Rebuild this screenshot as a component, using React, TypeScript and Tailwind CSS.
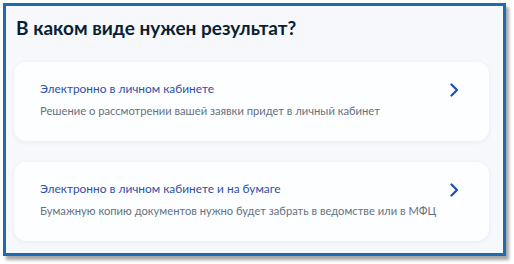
import React from "react";

function Chevron() {
  return (
    <svg width="10" height="14" viewBox="0 0 10 14" fill="none" className="shrink-0">
      <path d="M2.5 1.5 L8 7 L2.5 12.5" stroke="#1d4fb8" strokeWidth="2.2" strokeLinecap="round" strokeLinejoin="round" />
    </svg>
  );
}

function Option({ title, desc }: { title: string; desc: string }) {
  return (
    <div className="flex h-[79px] items-center rounded-[12px] bg-[#fdfeff] pb-[4px] pl-[26px] pr-[30px] shadow-[0_1px_4px_rgba(60,80,120,0.08)]">
      <div className="flex flex-1 flex-col">
        <div className="text-[11.9px] leading-[18px] text-[#2e50a5]">{title}</div>
        <div className="mt-[5px] text-[11.2px] leading-[16px] text-[#66727f]">{desc}</div>
      </div>
      <div className="-mt-[20px]">
        <Chevron />
      </div>
    </div>
  );
}

export default function App() {
  return (
    <div className="h-[264px] w-[514px] bg-white pl-[3px] pt-[3px]" style={{ fontFamily: "Lato, 'Noto Sans', sans-serif" }}>
      <div className="h-[253px] w-[503px] border-[3px] border-[#1b6cb3] bg-[#f6f8fc] shadow-[3px_4px_3px_rgba(0,0,0,0.35)]">
        <div className="pl-[10px] pt-[10px] text-[19px] font-bold leading-[24px] text-[#0b1f33]">
          В каком виде нужен результат?
        </div>
        <div className="ml-[8px] mr-[14px] mt-[22px] flex flex-col gap-[21px]">
          <Option title="Электронно в личном кабинете" desc="Решение о рассмотрении вашей заявки придет в личный кабинет" />
          <Option title="Электронно в личном кабинете и на бумаге" desc="Бумажную копию документов нужно будет забрать в ведомстве или в МФЦ" />
        </div>
      </div>
    </div>
  );
}
